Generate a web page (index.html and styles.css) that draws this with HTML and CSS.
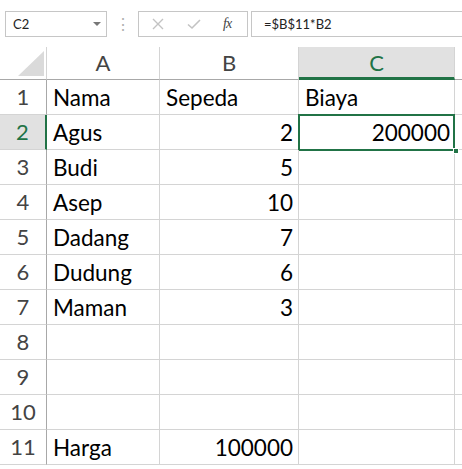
FILE: index.html
```html
<!DOCTYPE html>
<html lang="en">
<head>
    <meta charset="UTF-8">
    <meta name="viewport" content="width=device-width, initial-scale=1.0">
    <title>Sheet</title>
    <link rel="stylesheet" href="styles.css">
</head>
<body>
    <div class="toolbar">
        <div class="namebox">
            <span>C2</span>
            <span class="arrow"></span>
        </div>
        <div class="dots">⋮</div>
        <div class="buttons">
            <svg width="14" height="14" viewBox="0 0 14 14"><path d="M2 2 L12 12 M12 2 L2 12" stroke="#c3c3c3" stroke-width="1.4" fill="none"/></svg>
            <svg width="16" height="14" viewBox="0 0 16 14"><path d="M2 7.5 L6 11 L14 3" stroke="#c3c3c3" stroke-width="1.6" fill="none"/></svg>
            <span class="fx">fx</span>
        </div>
        <div class="formula">=$B$11*B2</div>
    </div>

    <div class="sheet">
        <div class="corner"><span class="tri"></span></div>
        <div class="colhead">A</div>
        <div class="colhead">B</div>
        <div class="colhead active">C</div>
        <div class="colhead last"></div>

        <div class="rowhead">1</div>
        <div class="cell">Nama</div>
        <div class="cell">Sepeda</div>
        <div class="cell">Biaya</div>
        <div class="cell last"></div>

        <div class="rowhead active">2</div>
        <div class="cell">Agus</div>
        <div class="cell num">2</div>
        <div class="cell num selected">200000<span class="handle"></span></div>
        <div class="cell last"></div>

        <div class="rowhead">3</div>
        <div class="cell">Budi</div>
        <div class="cell num">5</div>
        <div class="cell"></div>
        <div class="cell last"></div>

        <div class="rowhead">4</div>
        <div class="cell">Asep</div>
        <div class="cell num">10</div>
        <div class="cell"></div>
        <div class="cell last"></div>

        <div class="rowhead">5</div>
        <div class="cell">Dadang</div>
        <div class="cell num">7</div>
        <div class="cell"></div>
        <div class="cell last"></div>

        <div class="rowhead">6</div>
        <div class="cell">Dudung</div>
        <div class="cell num">6</div>
        <div class="cell"></div>
        <div class="cell last"></div>

        <div class="rowhead">7</div>
        <div class="cell">Maman</div>
        <div class="cell num">3</div>
        <div class="cell"></div>
        <div class="cell last"></div>

        <div class="rowhead">8</div>
        <div class="cell"></div>
        <div class="cell"></div>
        <div class="cell"></div>
        <div class="cell last"></div>

        <div class="rowhead">9</div>
        <div class="cell"></div>
        <div class="cell"></div>
        <div class="cell"></div>
        <div class="cell last"></div>

        <div class="rowhead">10</div>
        <div class="cell"></div>
        <div class="cell"></div>
        <div class="cell"></div>
        <div class="cell last"></div>

        <div class="rowhead">11</div>
        <div class="cell">Harga</div>
        <div class="cell num">100000</div>
        <div class="cell"></div>
        <div class="cell last"></div>
    </div>
</body>
</html>
```

FILE: styles.css
```css
* {
    box-sizing: border-box;
}

body {
    margin: 0;
    overflow: hidden;
    background: #fff;
    font-family: Lato, "Open Sans", sans-serif;
    color: #000;
}

/* barra de fórmulas */
.toolbar {
    display: flex;
    align-items: center;
    height: 47px;
    padding: 0 0 0 5px;
}

.namebox {
    display: flex;
    align-items: center;
    justify-content: space-between;
    width: 102px;
    height: 26px;
    border: 1px solid #c6c6c6;
    padding: 0 5px 0 7px;
    font-size: 13px;
    color: #222;
}

.arrow {
    width: 0;
    height: 0;
    border-left: 4px solid transparent;
    border-right: 4px solid transparent;
    border-top: 4px solid #777;
}

.dots {
    width: 31px;
    text-align: center;
    color: #b0b0b0;
    font-size: 16px;
}

.buttons {
    display: flex;
    align-items: center;
    gap: 21px;
    height: 26px;
    width: 110px;
    border: 1px solid #c6c6c6;
    padding: 0 0 0 12px;
}

.fx {
    font-family: "Liberation Serif", serif;
    font-style: italic;
    font-size: 14px;
    color: #444;
    letter-spacing: -1px;
}

.formula {
    flex: 1;
    height: 26px;
    margin-left: 3px;
    border: 1px solid #c6c6c6;
    border-right: none;
    padding: 4px 0 0 12px;
    font-size: 13px;
    color: #222;
}

/* planilha */
.sheet {
    display: grid;
    grid-template-columns: 47px 113px 139px 156px 1fr;
    grid-template-rows: 33px;
    grid-auto-rows: 35px;
}

.corner {
    position: relative;
    border-right: 1px solid #d4d4d4;
    border-bottom: 1px solid #a8a8a8;
}

.tri {
    position: absolute;
    right: 2px;
    bottom: 3px;
    width: 0;
    height: 0;
    border-left: 26px solid transparent;
    border-bottom: 25px solid #dadada;
}

.colhead {
    border-right: 1px solid #d4d4d4;
    border-bottom: 1px solid #a8a8a8;
    text-align: center;
    font-size: 22px;
    line-height: 32px;
    color: #444;
}

.colhead.active {
    background: #e1e1e1;
    color: #217346;
    border-bottom: 3px solid #217346;
}

.rowhead {
    border-right: 1px solid #a8a8a8;
    border-bottom: 1px solid #d4d4d4;
    text-align: center;
    font-size: 22px;
    line-height: 34px;
    color: #444;
}

.rowhead.active {
    background: #e1e1e1;
    color: #217346;
    border-right: 2px solid #217346;
}

.cell {
    position: relative;
    border-right: 1px solid #d4d4d4;
    border-bottom: 1px solid #d4d4d4;
    padding: 0 5px 0 6px;
    font-size: 22.5px;
    line-height: 36px;
    white-space: nowrap;
}

.last {
    border-right: none;
}

.num {
    text-align: right;
}

.selected {
    border: none;
}

.selected::after {
    content: "";
    position: absolute;
    left: -1px;
    top: -1px;
    right: 0;
    bottom: -1px;
    border: 2px solid #217346;
}

.handle {
    position: absolute;
    right: -4px;
    bottom: -4px;
    width: 6px;
    height: 6px;
    background: #217346;
    border: 1px solid #fff;
    z-index: 2;
}
```
